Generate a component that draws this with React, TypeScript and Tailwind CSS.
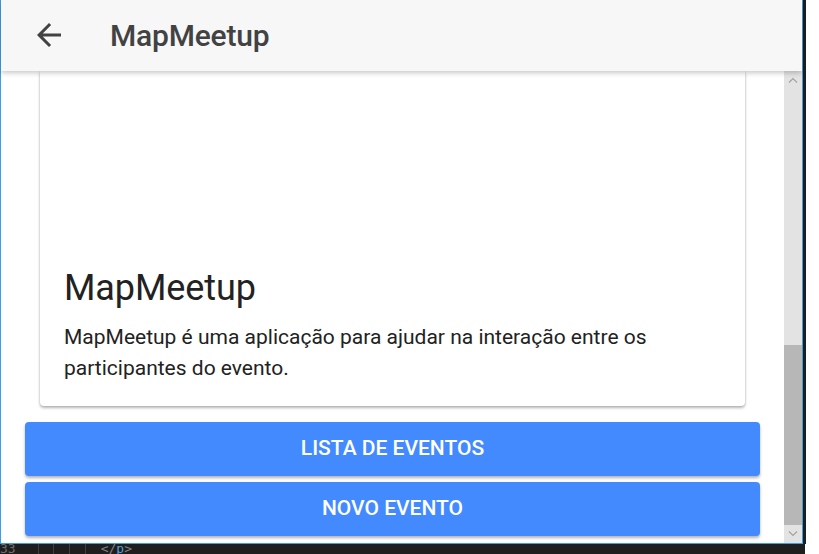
import React from 'react';

function BackArrow() {
  return (
    <svg viewBox="0 0 24 24" className="w-9 h-9" fill="#424242">
      <path d="M20 11H7.83l5.59-5.59L12 4l-8 8 8 8 1.41-1.41L7.83 13H20v-2z" />
    </svg>
  );
}

function Chevron({ up }: { up?: boolean }) {
  return (
    <svg viewBox="0 0 10 6" className="w-[10px] h-[6px]" fill="none" stroke="#a3a3a3" strokeWidth="1.2">
      {up ? <path d="M1 5.5 5 1.5 9 5.5" /> : <path d="M1 0.5 5 4.5 9 0.5" />}
    </svg>
  );
}

export default function App() {
  return (
    <div className="w-[819px] h-[554px] bg-white flex flex-col overflow-hidden" style={{ fontFamily: 'Roboto, "Liberation Sans", sans-serif' }}>
      <div className="flex h-[544px]">
        {/* Emulator window */}
        <div className="w-[803px] h-[544px] border-l border-r border-b border-[#3a9ee8] flex flex-col bg-white">
          {/* Toolbar */}
          <div className="relative z-10 h-[71px] shrink-0 bg-[#f7f7f7] flex items-center shadow-[0_2px_5px_rgba(0,0,0,0.22)]">
            <div className="ml-[30px] mt-[-1px]">
              <BackArrow />
            </div>
            <h1 className="ml-[43px] text-[30px] font-medium text-[#424242] tracking-[-0.2px]">MapMeetup</h1>
          </div>

          {/* Scroll area */}
          <div className="flex flex-1 min-h-0">
            <div className="flex-1 flex flex-col overflow-hidden">
              {/* Card */}
              <div className="mx-[39px] bg-white rounded-b-[4px] shadow-[0_2px_3px_rgba(0,0,0,0.28),0_0_2px_rgba(0,0,0,0.15)]">
                <div className="h-[196px]" />
                <div className="px-6 pb-[22px]">
                  <h2 className="text-[36px] leading-[42px] text-[#222] tracking-[-0.1px]">MapMeetup</h2>
                  <p className="mt-[13px] text-[21px] leading-[31px] text-[#222]">
                    MapMeetup é uma aplicação para ajudar na interação entre os participantes do evento.
                  </p>
                </div>
              </div>

              {/* Buttons */}
              <div className="ml-6 mr-[24px] mt-[16px] flex flex-col gap-[6px]">
                <button className="h-[54px] rounded-[4px] bg-[#448aff] text-white text-[21px] font-medium shadow-[0_2px_3px_rgba(0,0,0,0.3)]">
                  LISTA DE EVENTOS
                </button>
                <button className="h-[54px] rounded-[4px] bg-[#448aff] text-white text-[21px] font-medium shadow-[0_2px_3px_rgba(0,0,0,0.3)]">
                  NOVO EVENTO
                </button>
              </div>
            </div>

            {/* Scrollbar */}
            <div className="w-[18px] bg-[#e3e3e3] flex flex-col">
              <div className="h-[18px] flex items-center justify-center">
                <Chevron up />
              </div>
              <div className="h-[256px]" />
              <div className="flex-1 bg-[#b7b7b7]" />
              <div className="h-[18px] flex items-center justify-center">
                <Chevron />
              </div>
            </div>
          </div>
        </div>
        <div className="w-[3px] bg-[#1e1e1e]" />
        <div className="flex-1 bg-white" />
      </div>

      {/* Editor strip below */}
      <div className="w-[805px] flex-1 bg-[#1e1e1e] overflow-hidden flex items-start" style={{ fontFamily: '"DejaVu Sans Mono", monospace' }}>
        <span className="ml-0 mt-[-2px] text-[13px] leading-[14px] text-[#6e6e6e]">33</span>
        <div className="ml-[22px] h-full w-px bg-[#404040]" />
        <div className="ml-[14px] h-full w-px bg-[#404040]" />
        <div className="ml-[15px] h-full w-px bg-[#404040]" />
        <div className="ml-[15px] h-full w-px bg-[#404040]" />
        <span className="ml-[15px] mt-[-2px] text-[13px] leading-[14px] text-[#808080]">&lt;/<span className="text-[#569cd6]">p</span>&gt;</span>
      </div>
    </div>
  );
}
